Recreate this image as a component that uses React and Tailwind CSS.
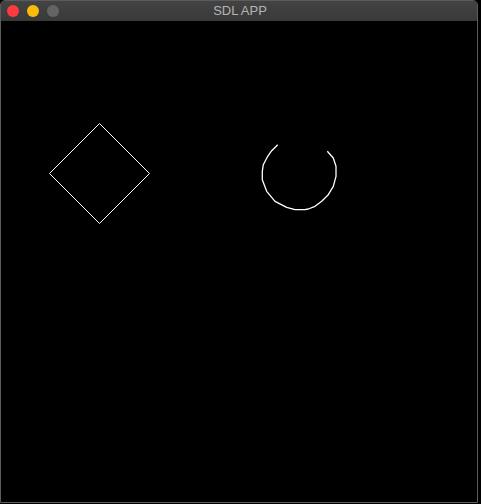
import React from 'react';

// SDL window: mac title bar + black canvas with a diamond and an open circle
const arc = [
  [277.7, 144.7], [271.7, 150.7], [267.7, 156.3], [263.3, 164.7], [262.3, 171.3],
  [262.3, 179.7], [266.7, 191.3], [275, 201.3], [286.7, 207.3], [295, 209.7],
  [305, 209.7], [308.3, 209], [315, 206.3], [321.7, 201.3], [328.3, 194.7],
  [333.3, 186.3], [336, 176.3], [336, 166.3], [333.3, 158], [327.3, 151.3],
];

const App = () => {
  return (
    <div className="w-[481px] h-[504px] bg-black flex items-start overflow-hidden">
      <div className="w-[478px] h-[503px] flex flex-col rounded-t-[5px] border border-[#5b5b5b] bg-black overflow-hidden">
        <div className="relative h-[21px] shrink-0 bg-gradient-to-b from-[#434343] to-[#393939] border-b border-black flex items-center">
          <div className="flex items-center gap-[8px] pl-[6px]">
            <span className="w-[12px] h-[12px] rounded-full bg-[#fc3a3f]" />
            <span className="w-[12px] h-[12px] rounded-full bg-[#fcbb0a]" />
            <span className="w-[12px] h-[12px] rounded-full bg-[#646464]" />
          </div>
          <div
            className="absolute inset-0 flex items-center justify-center text-[13px] text-[#b4b4b4] pl-[2px]"
            style={{ fontFamily: '"Liberation Sans", Arial, sans-serif' }}
          >
            SDL APP
          </div>
        </div>
        <div className="flex-1">
          <svg width="476" height="480" viewBox="1 22 476 480" fill="none">
            <polygon
              points="99.5,123.5 149.5,173.5 99.5,223.5 49.5,173.5"
              stroke="#ffffff"
              strokeWidth="1"
            />
            <polyline
              points={arc.map((p) => p.join(',')).join(' ')}
              stroke="#ffffff"
              strokeWidth="1.3"
              strokeLinejoin="round"
            />
          </svg>
        </div>
      </div>
    </div>
  );
};

export default App;
